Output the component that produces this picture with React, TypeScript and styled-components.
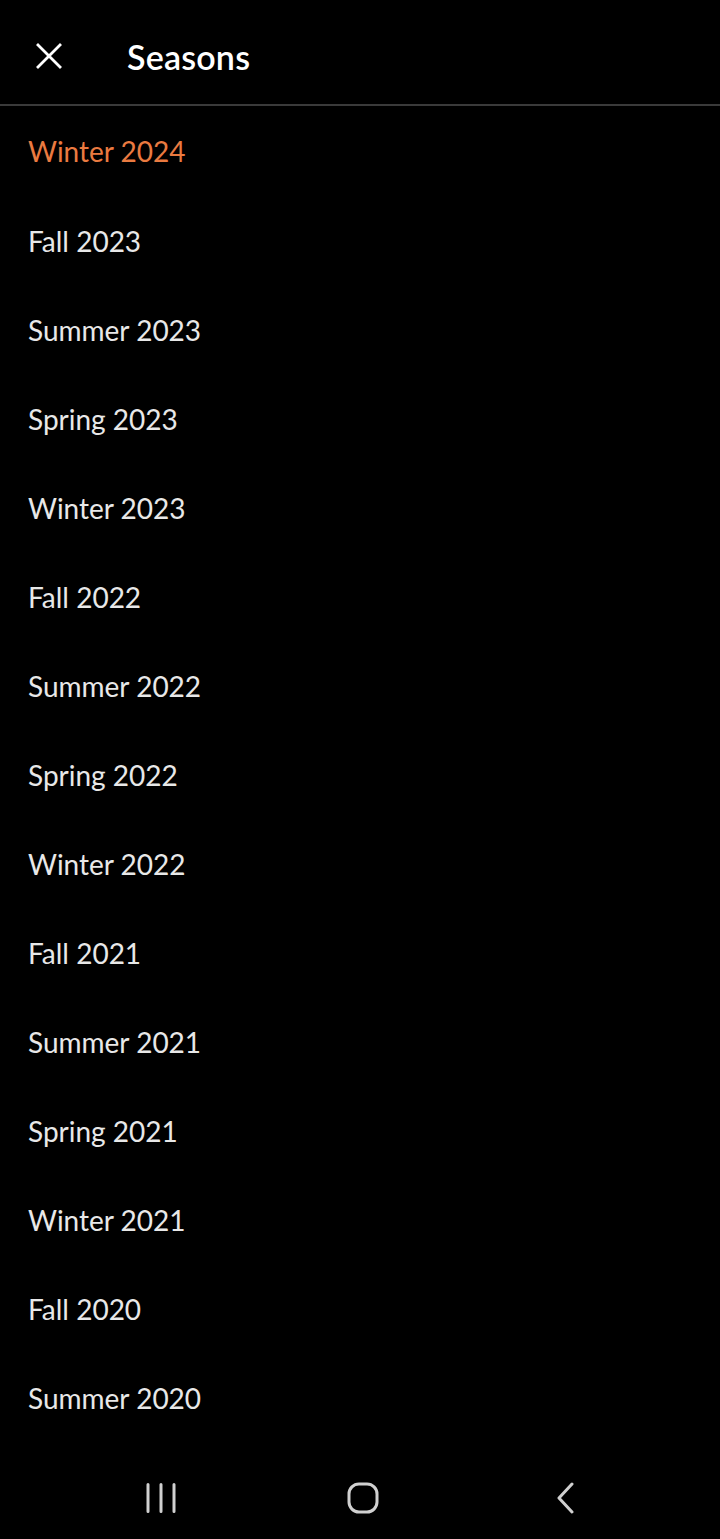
import React from "react";
import styled, { createGlobalStyle } from "styled-components";

const Global = createGlobalStyle`
  html, body { margin: 0; padding: 0; background: #000; }
  body { font-family: Lato, "Noto Sans", sans-serif; }
`;

const Screen = styled.div`
  width: 720px;
  height: 1539px;
  background: #000;
  display: flex;
  flex-direction: column;
  overflow: hidden;
`;

const Header = styled.header`
  display: flex;
  align-items: center;
  border-bottom: 2px solid #3a3a3a;
  box-sizing: border-box;
  height: 106px;
  padding-left: 33px;
  padding-top: 8px;
  gap: 62px;
`;

const CloseButton = styled.button`
  background: none;
  border: 0;
  padding: 0;
  width: 32px;
  height: 32px;
  display: flex;
  align-items: center;
  justify-content: center;
  color: #fff;
`;

const Title = styled.h1`
  margin: 0;
  font-family: Lato, sans-serif;
  font-weight: 600;
  font-size: 34px;
  color: #fff;
  letter-spacing: 0.2px;
`;

const List = styled.ul`
  list-style: none;
  margin: 0;
  padding: 0;
  flex: 1;
`;

const Item = styled.li<{ $active?: boolean }>`
  height: 89px;
  display: flex;
  align-items: center;
  padding-left: 28px;
  font-family: Lato, sans-serif;
  font-size: 28px;
  font-weight: 400;
  color: ${(p) => (p.$active ? "#ea7a40" : "#e8e8e8")};
  &:first-child { height: 91px; margin-top: -1px; }
`;

const NavBar = styled.nav`
  height: 82px;
  display: flex;
  align-items: center;
  justify-content: center;
  padding-left: 5px;
`;

const NavSlot = styled.div`
  width: 202px;
  display: flex;
  justify-content: center;
  align-items: center;
  color: #d0d0d0;
`;

const seasons = [
  "Winter 2024",
  "Fall 2023",
  "Summer 2023",
  "Spring 2023",
  "Winter 2023",
  "Fall 2022",
  "Summer 2022",
  "Spring 2022",
  "Winter 2022",
  "Fall 2021",
  "Summer 2021",
  "Spring 2021",
  "Winter 2021",
  "Fall 2020",
  "Summer 2020",
];

export default function App() {
  return (
    <>
      <Global />
      <Screen>
        <Header>
          <CloseButton aria-label="Close">
            <svg width="28" height="28" viewBox="0 0 28 28" fill="none">
              <path d="M3 3 L25 25 M25 3 L3 25" stroke="#fff" strokeWidth="2.8" strokeLinecap="square" />
            </svg>
          </CloseButton>
          <Title>Seasons</Title>
        </Header>
        <List>
          {seasons.map((s, i) => (
            <Item key={s} $active={i === 0}>
              {s}
            </Item>
          ))}
        </List>
        <NavBar>
          <NavSlot>
            <svg width="34" height="30" viewBox="0 0 34 30" fill="none">
              <path d="M4 1.5 V28.5 M17 1.5 V28.5 M30 1.5 V28.5" stroke="currentColor" strokeWidth="3" strokeLinecap="round" />
            </svg>
          </NavSlot>
          <NavSlot>
            <svg width="32" height="32" viewBox="0 0 32 32" fill="none">
              <rect x="2" y="2" width="28" height="28" rx="10" stroke="currentColor" strokeWidth="3" />
            </svg>
          </NavSlot>
          <NavSlot>
            <svg width="22" height="32" viewBox="0 0 22 32" fill="none">
              <path d="M18 2 L5 16 L18 30" stroke="currentColor" strokeWidth="3" strokeLinecap="round" strokeLinejoin="round" />
            </svg>
          </NavSlot>
        </NavBar>
      </Screen>
    </>
  );
}
